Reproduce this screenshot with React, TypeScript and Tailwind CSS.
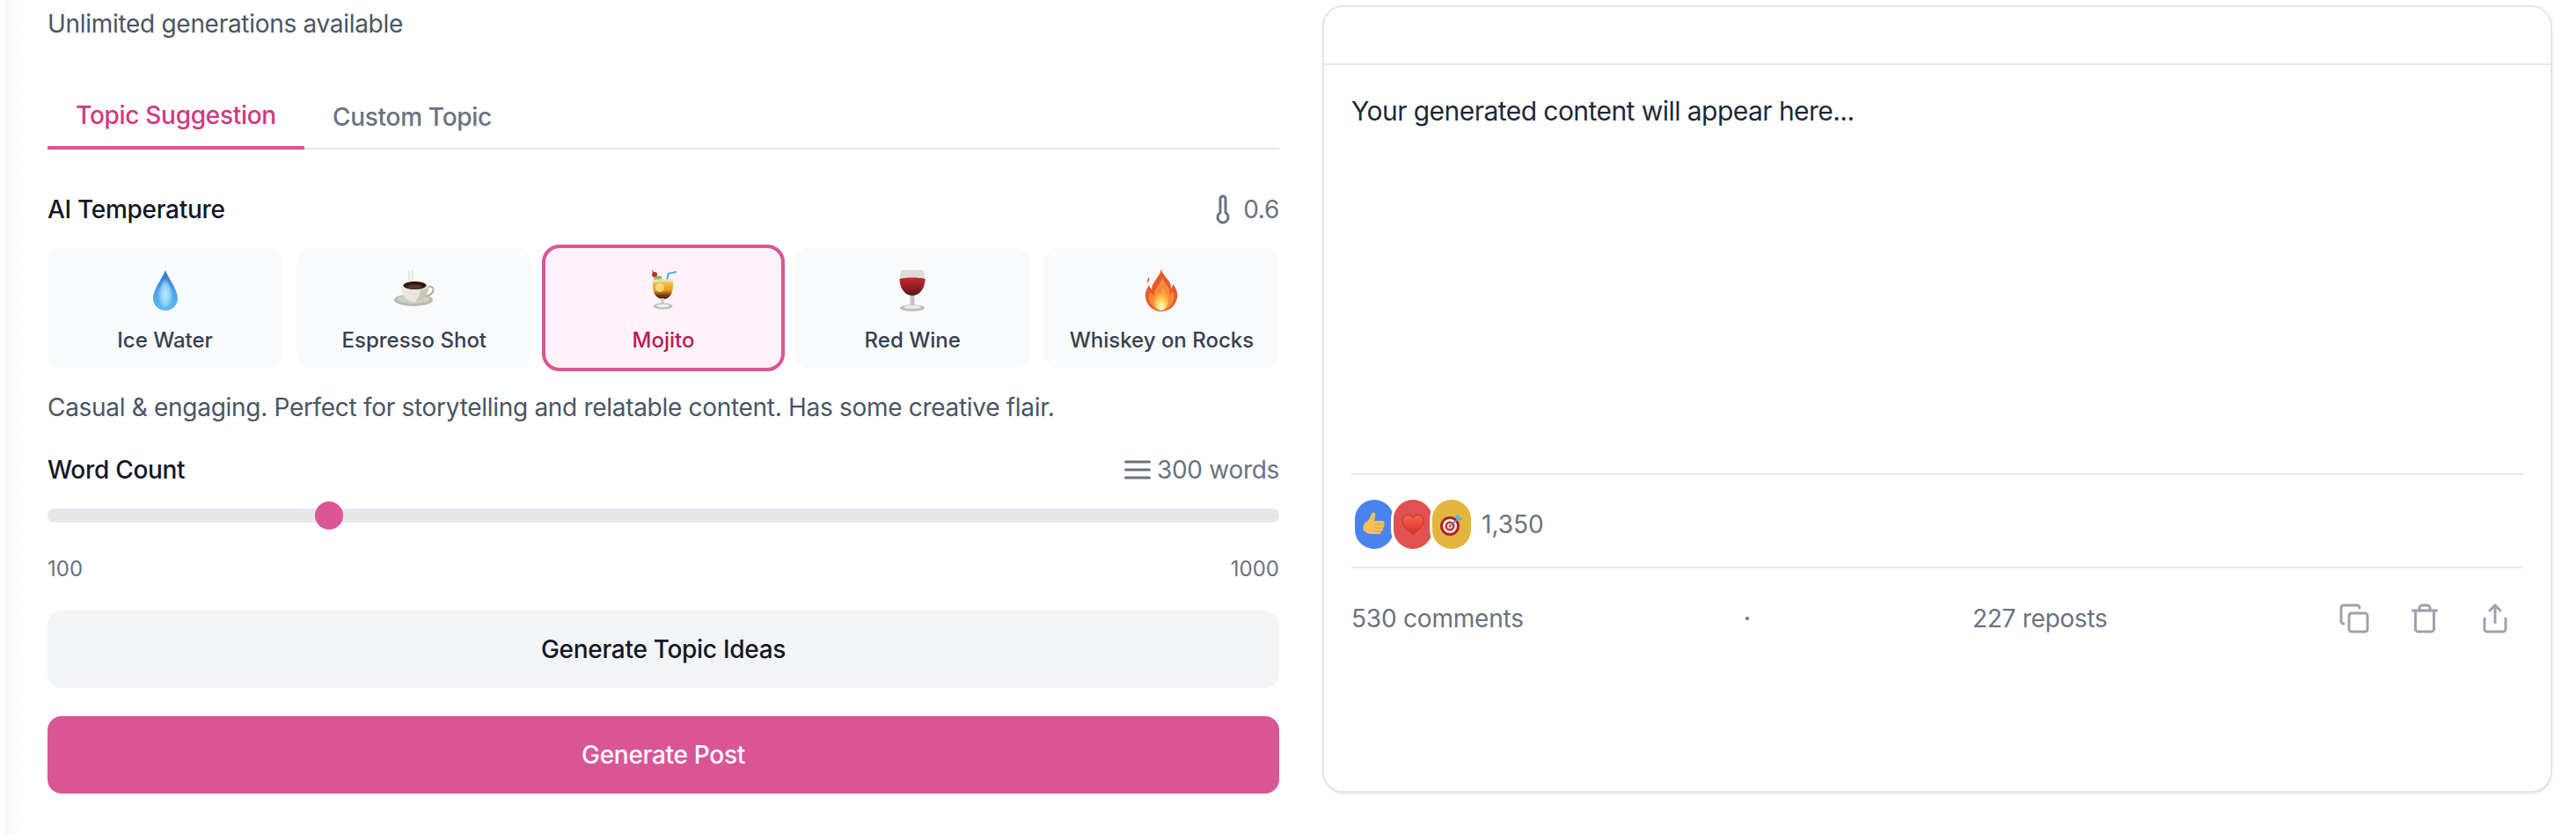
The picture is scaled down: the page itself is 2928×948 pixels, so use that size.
import React from "react";

function Drop() {
  return (
    <svg width="46" height="46" viewBox="0 0 46 46">
      <defs>
        <linearGradient id="dropG" x1="0" y1="0" x2="0" y2="1">
          <stop offset="0" stopColor="#2f78c4" />
          <stop offset="0.55" stopColor="#4aa3e8" />
          <stop offset="1" stopColor="#5cbcf2" />
        </linearGradient>
        <radialGradient id="dropH" cx="0.5" cy="0.62" r="0.5">
          <stop offset="0" stopColor="#c4e9fb" />
          <stop offset="0.6" stopColor="#8ad0f7" />
          <stop offset="1" stopColor="#8ad0f7" stopOpacity="0" />
        </radialGradient>
      </defs>
      <path d="M23 0C21 7 9 22 9 32a14 14 0 0 0 28 0C37 22 25 7 23 0Z" fill="url(#dropG)" />
      <path d="M23 5C21 13 14 23 14 31a9 11 0 0 0 18 0C32 23 25 13 23 5Z" fill="url(#dropH)" />
    </svg>
  );
}

function Coffee() {
  return (
    <svg width="48" height="46" viewBox="0 0 48 46">
      <path d="M18 1c-2 3 2 4 0 6s1 3 0 5M22 0c-2 3 2 4 0 6s1 3 0 5" stroke="#dcdcdc" strokeWidth="1.600" fill="none" />
      <ellipse cx="23" cy="34" rx="22" ry="7" fill="#bdbab0" />
      <ellipse cx="23" cy="33" rx="18" ry="5" fill="#d2cfc6" />
      <path d="M40 19c4-1 6 1 5.500 4-.6 4-5 6-9 7" stroke="#b5b1a7" strokeWidth="2" fill="none" />
      <path d="M9 17h31c0 11-4 18-15.500 19C13 35 9 28 9 17Z" fill="#e9e6df" />
      <path d="M31 17h9c0 11-4 18-15.500 19 5.500-3 6.500-12 6.500-19Z" fill="#c9c5bc" />
      <ellipse cx="24.500" cy="17" rx="15.500" ry="6" fill="#f2f0ea" />
      <ellipse cx="24.500" cy="17.500" rx="13" ry="4.600" fill="#2e1a12" />
      <ellipse cx="24.500" cy="19" rx="8.500" ry="2.400" fill="#5a3625" />
    </svg>
  );
}

function Cocktail() {
  return (
    <svg width="31" height="46" viewBox="0 0 31 46">
      <defs>
        <linearGradient id="mojG" x1="0" y1="0" x2="0" y2="1">
          <stop offset="0" stopColor="#f3c640" />
          <stop offset="0.5" stopColor="#e99a24" />
          <stop offset="0.78" stopColor="#7d3315" />
          <stop offset="1" stopColor="#3e2a22" />
        </linearGradient>
      </defs>
      <path d="M5 9c2-3 6-3 9-2 1 3-1 7-4 8-3 0-5-3-5-6Z" fill="#8fbf45" />
      <path d="M19.300 15 21.700 4 31 2" stroke="#4fa9e4" strokeWidth="2" fill="none" />
      <path d="M4 11c7-1 16-1 23 0 1 11-2 22-11.500 22S3 22 4 11Z" fill="#e8dfc6" />
      <path d="M4 14c7-1 16-1 23 0 .6 10-2.500 19-11.500 19S3.400 24 4 14Z" fill="url(#mojG)" />
      <ellipse cx="12" cy="20" rx="5" ry="5" fill="#fbe58a" opacity="0.75" />
      <circle cx="6" cy="5" r="3" fill="#c62b2b" />
      <path d="M3 0l3 5" stroke="#7a4a2a" strokeWidth="1" />
      <rect x="13.500" y="32" width="3.500" height="7" fill="#c9c9c9" />
      <ellipse cx="15.500" cy="41" rx="11" ry="3.500" fill="#bdbdbd" />
      <ellipse cx="15.500" cy="40.500" rx="7.500" ry="1.800" fill="#f1f1f1" />
    </svg>
  );
}

function Wine() {
  return (
    <svg width="30" height="48" viewBox="0 0 30 48">
      <defs>
        <linearGradient id="wineG" x1="0" y1="0" x2="0" y2="1">
          <stop offset="0" stopColor="#c8262b" />
          <stop offset="0.6" stopColor="#8f1d25" />
          <stop offset="1" stopColor="#3f1a1e" />
        </linearGradient>
      </defs>
      <path d="M3 1h24c2 4 2.600 8 2.600 12 0 9-6 17-14.600 17S.4 22 .4 13C.4 9 1 5 3 1Z" fill="#dcdcdc" />
      <path d="M.5 11c9-2 20-2 29 0 0 10-6 19-14.500 19S.5 21 .5 11Z" fill="url(#wineG)" />
      <rect x="12.500" y="30" width="5" height="11" fill="#c4c4c4" />
      <ellipse cx="15" cy="44" rx="14" ry="3.800" fill="#bdbdbd" />
      <ellipse cx="15" cy="43" rx="10" ry="2" fill="#ececec" />
    </svg>
  );
}

function Fire() {
  return (
    <svg width="38" height="48" viewBox="0 0 38 48">
      <defs>
        <radialGradient id="fireC" cx="0.5" cy="0.85" r="0.55">
          <stop offset="0" stopColor="#fffbe0" />
          <stop offset="0.45" stopColor="#fde36a" />
          <stop offset="1" stopColor="#f9a23a" />
        </radialGradient>
      </defs>
      <path d="M19 0c1 6 7 10 10 16 1 2 1 4 1 6 1-1 2-3 2-5 4 4 6 10 5 15-1 9-9 16-18 16S2 41 1 32c-1-6 2-10 4-14 1 3 2 4 3 5 0-8 9-14 11-23Z" fill="#e85a2c" />
      <path d="M5 9c1 2 0 5-2 7 0-3 0-5 2-7Z" fill="#e85a2c" />
      <path d="M20 9c1 5 6 9 8 14 1 3 0 6 0 6 2-1 3-3 4-4 1 4 2 7 1 10-2 7-8 12-14 12S7 42 5 35c-1-3 0-6 2-9 1 2 2 3 4 4-1-8 8-13 9-21Z" fill="#f58b3a" />
      <path d="M20 20c1 4 5 7 7 12 2 7-3 15-8 15S9 40 11 33c1-3 3-4 5-7 1 1 1 2 2 3 1-3 2-6 2-9Z" fill="url(#fireC)" />
    </svg>
  );
}

function Thumb() {
  return (
    <svg width="28" height="28" viewBox="0 0 28 28">
      <path d="M2 13c3-1 5-3 7-6 1-2 1-5 3-6 3-1 4 2 3 5l-1 4h9c3 0 3 3 2 4 1 1 1 3-1 4 0 2 0 3-2 4 0 2-1 3-3 3H10c-3 0-5-2-7-3-2-1-2-7 0-9Z" fill="#f4c25a" />
      <path d="M15 14h10M15 18h9M15 22h7" stroke="#d49a35" strokeWidth="1" />
    </svg>
  );
}

function Heart() {
  return (
    <svg width="26" height="25" viewBox="0 0 28 26">
      <defs>
        <linearGradient id="hg" x1="0" y1="0" x2="0" y2="1">
          <stop offset="0" stopColor="#f9654f" />
          <stop offset="1" stopColor="#d92d20" />
        </linearGradient>
      </defs>
      <path d="M14 25C7 19 1 14 1 8c0-4 3-7 7-7 3 0 5 2 6 4 1-2 3-4 6-4 4 0 7 3 7 7 0 6-6 11-13 17Z" fill="url(#hg)" stroke="#b3261e" strokeWidth="0.8" />
    </svg>
  );
}

function Target() {
  return (
    <svg width="28" height="26" viewBox="0 0 28 26">
      <circle cx="12" cy="15" r="11" fill="#a8262a" />
      <circle cx="12" cy="15" r="8" fill="#f3ece8" />
      <circle cx="12" cy="15" r="5.500" fill="#c93236" />
      <circle cx="12" cy="15" r="3" fill="#f3ece8" />
      <circle cx="12" cy="15" r="1.400" fill="#c93236" />
      <path d="M12 15 23 5" stroke="#5f8fa6" strokeWidth="1.600" />
      <path d="M21 1l2 4 4 1-3 3-4-1-2-3Z" fill="#58b6d4" />
    </svg>
  );
}

function Thermo() {
  return (
    <svg width="36" height="36" viewBox="0 0 24 24" fill="none" stroke="#6b7280" strokeWidth="2" strokeLinecap="round" strokeLinejoin="round">
      <path d="M14 4v10.540a4 4 0 1 1-4 0V4a2 2 0 0 1 4 0Z" />
    </svg>
  );
}

function Lines() {
  return (
    <svg width="36" height="36" viewBox="0 0 24 24" fill="none" stroke="#6b7280" strokeWidth="2" strokeLinecap="round" strokeLinejoin="round">
      <path d="M3 6h18M3 12h18M3 18h18" />
    </svg>
  );
}

function CopyI() {
  return (
    <svg width="36" height="36" viewBox="0 0 24 24" fill="none" stroke="#9ca3af" strokeWidth="2" strokeLinecap="round" strokeLinejoin="round">
      <rect x="8" y="8" width="14" height="14" rx="2" ry="2" />
      <path d="M4 16c-1.100 0-2-.9-2-2V4c0-1.100.9-2 2-2h10c1.100 0 2 .9 2 2" />
    </svg>
  );
}

function TrashI() {
  return (
    <svg width="36" height="36" viewBox="0 0 24 24" fill="none" stroke="#9ca3af" strokeWidth="2" strokeLinecap="round" strokeLinejoin="round">
      <path d="M3 6h18" />
      <path d="M19 6v14c0 1-1 2-2 2H7c-1 0-2-1-2-2V6" />
      <path d="M8 6V4c0-1 1-2 2-2h4c1 0 2 1 2 2v2" />
    </svg>
  );
}

function ShareI() {
  return (
    <svg width="36" height="36" viewBox="0 0 24 24" fill="none" stroke="#9ca3af" strokeWidth="2" strokeLinecap="round" strokeLinejoin="round">
      <path d="M4 12v8a2 2 0 0 0 2 2h12a2 2 0 0 0 2-2v-8" />
      <path d="M16 6l-4-4-4 4" />
      <path d="M12 2v13" />
    </svg>
  );
}

function Preset({ icon, label, active }: { icon: React.ReactNode; label: string; active?: boolean }) {
  return (
    <div
      className={
        active
          ? "-mx-[4px] -my-[4px] flex flex-col items-center rounded-[20px] border-[4px] border-[#db5597] bg-[#fdf2f8] pt-[25px]"
          : "flex flex-col items-center rounded-[16px] bg-[#f9fafb] pt-[25px]"
      }
    >
      <div className="flex h-[46px] items-center justify-center">{icon}</div>
      <div className={active ? "mt-[18px] text-[24px] leading-[32px] font-medium tracking-normal text-[#b31d56]" : "mt-[18px] text-[24px] leading-[32px] font-medium tracking-normal text-[#374151]"}>{label}</div>
    </div>
  );
}

export default function App() {
  return (
    <div className="flex h-[948px] w-[2928px] overflow-hidden bg-white font-['Inter',sans-serif] text-[28px] leading-[40px] tracking-[-0.3px]">
      <div className="w-[1503px] shrink-0 bg-[linear-gradient(to_right,#ffffff_0px,#ffffff_5px,#f6f6f7_6px,#ffffff_22px)] pl-[54px] pr-[49px] pt-[7px]">
        <div className="text-[#4b5563]">Unlimited generations available</div>

        <div className="mt-[56px] flex h-[67px] border-b-[2px] border-[#e5e7eb]">
          <div className="-mb-[2px] h-[67px] w-[292px] border-b-[4px] border-[#db5597] pt-[8px] text-center font-medium text-[#cf3a7d]">Topic Suggestion</div>
          <div className="whitespace-nowrap pl-[32px] pt-[10px] font-medium text-[#6b7280]">Custom Topic</div>
        </div>

        <div className="mt-[48px] flex h-[40px] items-center justify-between">
          <div className="font-medium text-[#111827]">AI Temperature</div>
          <div className="flex items-center gap-[5px] text-[#6b7280]">
            <Thermo />
            <span>0.6</span>
          </div>
        </div>

        <div className="mt-[24px] grid h-[136px] grid-cols-5 gap-[16px]">
          <Preset icon={<Drop />} label="Ice Water" />
          <Preset icon={<Coffee />} label="Espresso Shot" />
          <Preset icon={<Cocktail />} label="Mojito" active />
          <Preset icon={<Wine />} label="Red Wine" />
          <Preset icon={<Fire />} label="Whiskey on Rocks" />
        </div>

        <div className="mt-[25px] text-[#4b5563]">Casual &amp; engaging. Perfect for storytelling and relatable content. Has some creative flair.</div>

        <div className="mt-[31px] flex h-[40px] items-center justify-between">
          <div className="font-medium text-[#111827]">Word Count</div>
          <div className="flex items-center gap-[4px] text-[#6b7280]">
            <Lines />
            <span>300 words</span>
          </div>
        </div>

        <div className="relative mt-[24px] h-[16px] rounded-full bg-[#e5e7eb]">
          <div className="absolute left-[304px] top-[-8px] h-[32px] w-[32px] rounded-full bg-[#db5597]" />
        </div>

        <div className="mt-[33px] flex justify-between text-[24px] leading-[40px] tracking-normal text-[#6b7280]">
          <span>100</span>
          <span>1000</span>
        </div>

        <div className="mt-[27px] flex h-[88px] items-center justify-center rounded-[16px] bg-[#f3f4f6] font-medium text-[#111827]">Generate Topic Ideas</div>
        <div className="mt-[32px] flex h-[88px] items-center justify-center rounded-[16px] bg-[#da5596] font-medium text-white">Generate Post</div>
      </div>

      <div className="pt-[6px]">
        <div className="flex h-[895px] w-[1398px] flex-col rounded-[24px] border-[2px] border-[#e5e7eb] bg-white shadow-sm">
          <div className="h-[66px] border-b-[2px] border-[#e5e7eb]" />
          <div className="h-[464px] px-[31px] pt-[32px] text-[30px] tracking-[-0.55px] text-[#1f2937]">Your generated content will appear here...</div>
          <div className="mx-[31px] flex h-[108px] items-center border-y-[2px] border-[#e5e7eb] pl-[4px] pt-[8px]">
            <div className="flex">
              <div className="flex h-[56px] w-[44px] items-center justify-center rounded-full bg-[#4b83ee]"><Thumb /></div>
              <div className="flex h-[56px] w-[44px] items-center justify-center rounded-full bg-[#df524f] ring-[3px] ring-white"><Heart /></div>
              <div className="flex h-[56px] w-[44px] items-center justify-center rounded-full bg-[#e3b53c] ring-[3px] ring-white"><Target /></div>
            </div>
            <span className="ml-[12px] tracking-normal text-[#6b7280]">1,350</span>
          </div>
          <div className="mx-[31px] mt-[37px] flex h-[40px] items-center text-[#6b7280]">
            <span className="w-[448px] tracking-[-0.2px]">530 comments</span>
            <span className="h-[4px] w-[4px] rounded-full bg-[#6b7280]" />
            <span className="ml-[254px]">227 reposts</span>
            <div className="ml-auto flex items-center gap-[44px] pr-[14px]">
              <CopyI />
              <TrashI />
              <ShareI />
            </div>
          </div>
        </div>
      </div>
    </div>
  );
}
